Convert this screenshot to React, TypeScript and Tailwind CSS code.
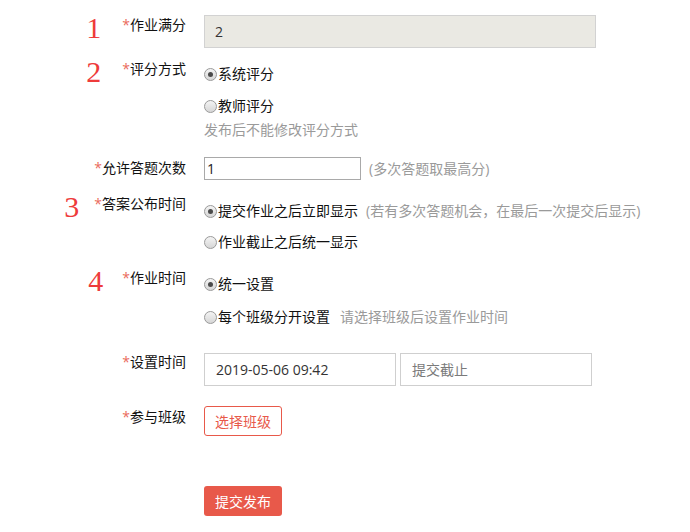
import React from "react";

const Radio = ({ checked, children }: { checked?: boolean; children: React.ReactNode }) => (
  <div className="flex items-center h-5 leading-5 text-[14px] text-[#111]">
    <span className="relative mr-px flex h-[13px] w-[13px] items-center justify-center rounded-full border border-[#9a9a9a] bg-gradient-to-b from-[#f4f4f4] to-[#d6d6d6]">
      {checked && <span className="h-[5px] w-[5px] rounded-full bg-[#4a4a4a]" />}
    </span>
    {children}
  </div>
);

const Label = ({ num, gap, text }: { num?: string; gap?: string; text: string }) => (
  <div className="flex items-start justify-end">
    {num && (
      <span className={`-mt-[2px] font-['Liberation_Serif',serif] text-[30px] leading-[30px] text-[#ee3b3b] ${gap}`}>
        {num}
      </span>
    )}
    <span className="h-5 leading-5 text-[14px] text-[#111]">
      <span className="text-[#ea6a5c]">*</span>
      {text}
    </span>
  </div>
);

const Row = ({ className, children }: { className?: string; children: React.ReactNode }) => (
  <div className={`grid grid-cols-[186px_1fr] gap-x-[18px] ${className ?? ""}`}>{children}</div>
);

export default function App() {
  return (
    <div className="min-h-[532px] w-[690px] bg-white font-['Open_Sans','Noto_Sans_CJK_SC',sans-serif] text-[14px]">
      <div className="flex flex-col pt-[15px]">
        <Row>
          <Label num="1" gap="mr-[21px]" text="作业满分" />
          <div className="flex h-[33px] w-[392px] items-center border border-[#d2d2d2] bg-[#eae9e3] pl-[10px] text-[#333]">
            2
          </div>
        </Row>

        <Row className="mt-[11px]">
          <Label num="2" gap="mr-[21px]" text="评分方式" />
          <div className="flex flex-col pt-[5px]">
            <Radio checked>系统评分</Radio>
            <div className="mt-[12px]">
              <Radio>教师评分</Radio>
            </div>
            <div className="mt-[4px] h-5 leading-5 text-[#9a9a9a]">发布后不能修改评分方式</div>
          </div>
        </Row>

        <Row className="mt-[17px]">
          <div className="pt-px">
            <Label text="允许答题次数" />
          </div>
          <div className="flex items-center">
            <div className="flex h-[23px] w-[157px] items-center border border-[#a9a9a9] pl-[2px] text-[#222]">1</div>
            <span className="ml-[8px] text-[#9a9a9a]">(多次答题取最高分)</span>
          </div>
        </Row>

        <Row className="mt-[14px]">
          <Label num="3" gap="mr-[15px]" text="答案公布时间" />
          <div className="flex flex-col pt-[7px]">
            <Radio checked>
              提交作业之后立即显示
              <span className="ml-[8px] text-[#9a9a9a]">(若有多次答题机会，在最后一次提交后显示)</span>
            </Radio>
            <div className="mt-[11px]">
              <Radio>作业截止之后统一显示</Radio>
            </div>
          </div>
        </Row>

        <Row className="mt-[16px]">
          <Label num="4" gap="mr-[19px]" text="作业时间" />
          <div className="flex flex-col pt-[6px]">
            <Radio checked>统一设置</Radio>
            <div className="mt-[13px]">
              <Radio>
                每个班级分开设置
                <span className="ml-[10px] text-[#9a9a9a]">请选择班级后设置作业时间</span>
              </Radio>
            </div>
          </div>
        </Row>

        <Row className="mt-[25px]">
          <Label text="设置时间" />
          <div className="mt-px flex gap-[4px]">
            <div className="flex h-[33px] w-[192px] items-center border border-[#cfcfcf] pl-[11px] text-[#333]">
              2019-05-06 09:42
            </div>
            <div className="flex h-[33px] w-[192px] items-center border border-[#cfcfcf] pl-[11px] text-[#7a7a7a]">
              提交截止
            </div>
          </div>
        </Row>

        <Row className="mt-[20px]">
          <div className="pt-px">
            <Label text="参与班级" />
          </div>
          <div>
            <button className="flex h-[30px] w-[78px] items-center justify-center rounded-[3px] border border-[#e8594a] bg-white text-[#e8594a]">
              选择班级
            </button>
          </div>
        </Row>

        <Row className="mt-[50px]">
          <div />
          <div>
            <button className="flex h-[30px] w-[78px] items-center justify-center rounded-[3px] bg-[#e8594a] text-white">
              提交发布
            </button>
          </div>
        </Row>
      </div>
    </div>
  );
}
